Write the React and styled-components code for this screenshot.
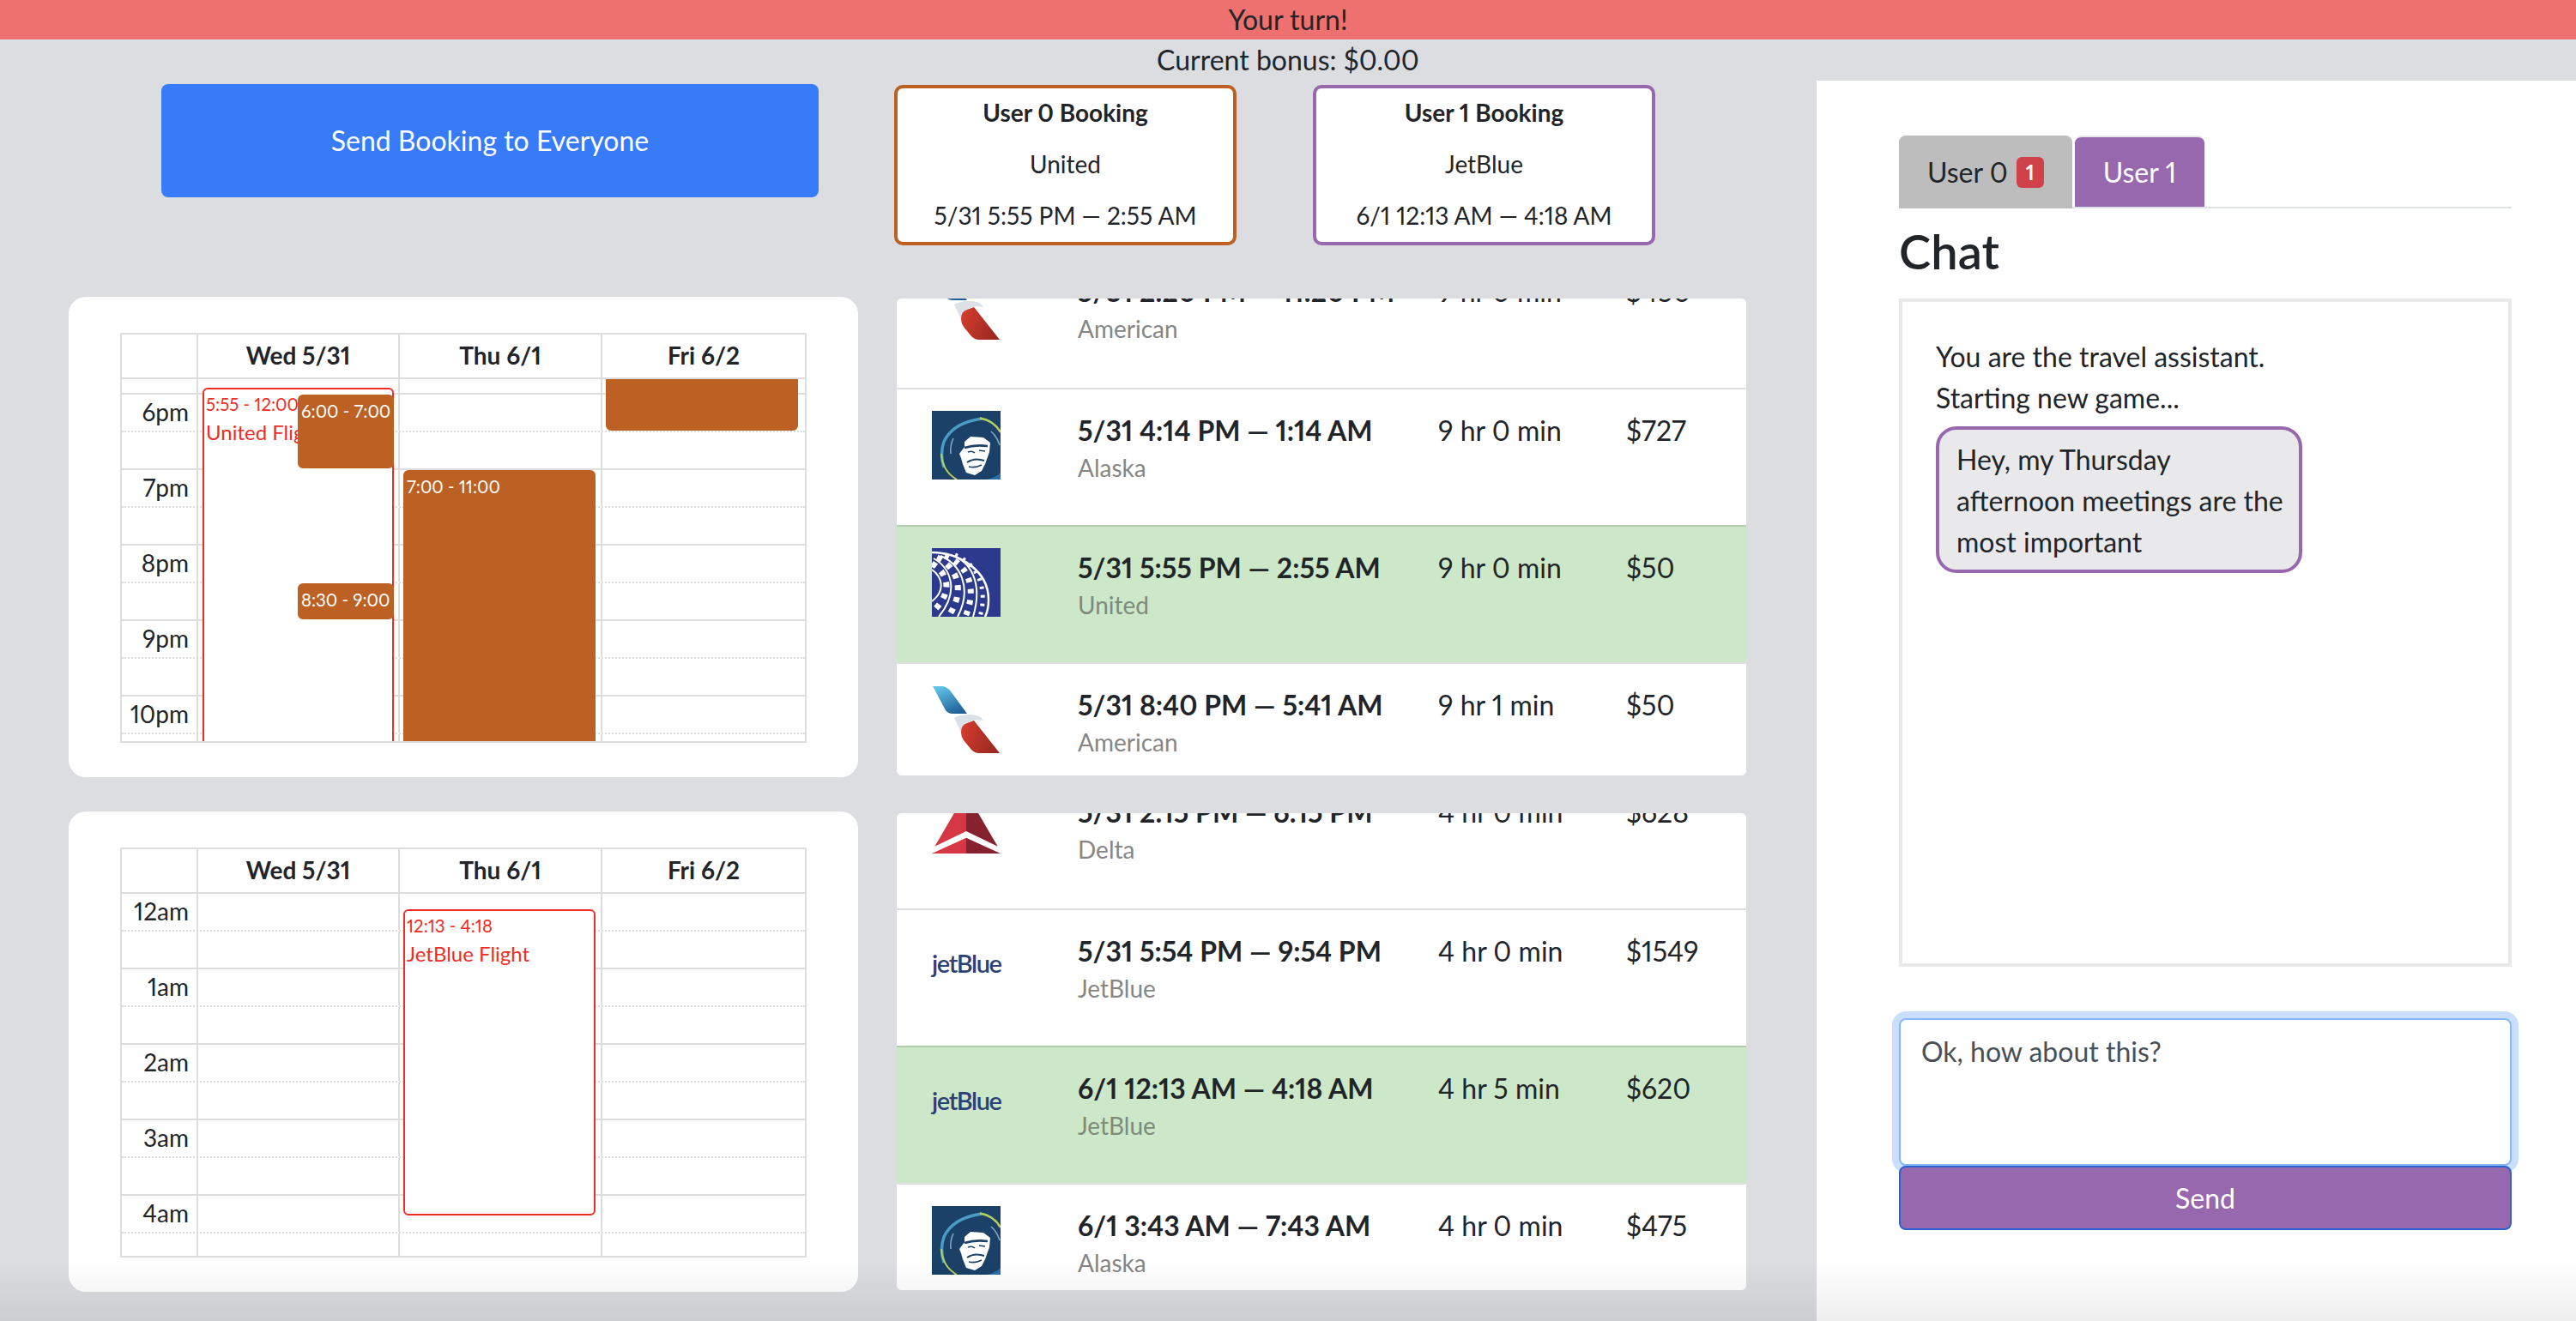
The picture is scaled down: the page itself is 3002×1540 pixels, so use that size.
import React from 'react'
import styled, { createGlobalStyle } from 'styled-components'

const GlobalStyle = createGlobalStyle`
 * {
  box-sizing: border-box;
 }
 body {
  margin: 0;
  background: #dcdde1;
  color: #212529;
  font-family: 'Lato', 'Liberation Sans', sans-serif;
  font-size: 32px;
  line-height: 48px;
  font-variant-numeric: proportional-nums;
  font-feature-settings: 'pnum' 1;
  overflow: hidden;
 }
`

const Page = styled.div`
 width: 3002px;
 height: 1540px;
 display: flex;
 flex-direction: column;
 overflow: hidden;
`

const TurnBanner = styled.div`
 height: 46px;
 background: #ef716f;
 text-align: center;
 line-height: 46px;
`

const BonusLine = styled.div`
 height: 48px;
 text-align: center;
`

const Main = styled.div`
 flex: 1;
 display: flex;
`

const LeftArea = styled.div`
 width: 2117px;
 display: flex;
 flex-direction: column;
`

const TopRow = styled.div`
 height: 252px;
 padding: 4px 0 0 188px;
 display: flex;
 align-items: flex-start;
`

const BookingButton = styled.button`
 width: 766px;
 height: 132px;
 background: #387bf8;
 color: #fff;
 border: none;
 border-radius: 8px;
 font: inherit;
 margin-right: 88px;
`

const BookingCard = styled.div`
 width: 399px;
 height: 187px;
 margin: 1px 89px 0 0;
 border: 4px solid ${(p) => p.$color};
 border-radius: 10px;
 background: #fff;
 text-align: center;
 font-size: 28px;
 line-height: 60px;
 strong {
  display: block;
  margin-top: -2px;
 }
 div {
  white-space: nowrap;
 }
`

const GameRow = styled.div`
 height: 560px;
 margin-bottom: 40px;
 padding-left: 80px;
 display: flex;
 align-items: center;
`

const CalendarCard = styled.div`
 width: 920px;
 height: 560px;
 background: #fff;
 border-radius: 20px;
 padding: 42px 60px 0;
 margin-right: 45px;
`

const Calendar = styled.div`
 width: 800px;
 height: 478px;
 border: 2px solid #ddd;
 display: flex;
 flex-direction: column;
 overflow: hidden;
`

const calendarColumns = '87px 235px 236px 1fr'

const CalendarHeader = styled.div`
 flex: none;
 height: 52px;
 display: grid;
 grid-template-columns: ${calendarColumns};
 border-bottom: 2px solid #ddd;
`

const HeaderCell = styled.div`
 border-left: 2px solid #ddd;
 font-size: 28px;
 font-weight: 700;
 line-height: 48px;
 text-align: center;
 &:first-child {
  border-left: none;
 }
`

const TimeBody = styled.div`
 flex: 1;
 overflow: hidden;
`

const TimeScroll = styled.div`
 position: relative;
 margin-top: ${(p) => p.$offset}px;
`

const SlotRow = styled.div`
 height: 44px;
 display: grid;
 grid-template-columns: ${calendarColumns};
 border-top: 2px ${(p) => (p.$hour ? 'solid' : 'dotted')} #ddd;
`

const SlotCell = styled.div`
 border-left: 2px solid #ddd;
`

const SlotLabel = styled.div`
 padding-right: 9px;
 text-align: right;
 font-size: 28px;
 line-height: 40px;
 white-space: nowrap;
`

const EventLayer = styled.div`
 position: absolute;
 inset: 0;
 display: grid;
 grid-template-columns: ${calendarColumns};
`

const EventColumn = styled.div`
 position: relative;
`

const CalendarEvent = styled.div`
 position: absolute;
 top: ${(p) => p.$top}px;
 left: ${(p) => p.$left}px;
 width: ${(p) => p.$width}px;
 height: ${(p) => p.$height}px;
 padding: 2px;
 border-radius: 6px;
 overflow: hidden;
 white-space: nowrap;
 border: 2px solid ${(p) => (p.$outline ? '#f02d25' : '#bd6023')};
 background: ${(p) => (p.$outline ? '#fff' : '#bd6023')};
 color: ${(p) => (p.$outline ? '#f02d25' : '#fff')};
`

const EventTime = styled.div`
 font-size: 20.4px;
 line-height: 30px;
`

const EventTitle = styled.div`
 font-size: 24px;
 line-height: 36px;
`

const FlightList = styled.div`
 width: 990px;
 height: 556px;
 background: #fff;
 border-radius: 6px;
 overflow: hidden;
`

const FlightScroll = styled.div`
 margin-top: ${(p) => p.$offset}px;
`

const FlightRow = styled.div`
 height: 160px;
 padding: 25px 0 0 41px;
 display: grid;
 grid-template-columns: 80px 90px 420px 219px 1fr;
 align-items: start;
 border-top: 2px solid rgba(0, 0, 0, 0.125);
 background: ${(p) => (p.$selected ? '#cde8c8' : '#fff')};
 &:first-child {
  border-top: none;
 }
`

const LogoBox = styled.div`
 width: 80px;
 height: 80px;
 grid-column: 1;
 display: flex;
 align-items: center;
 svg {
  display: block;
 }
`

const JetBlueMark = styled.span`
 width: 80px;
 margin-top: -6px;
 color: #2d3f77;
 font-size: 29px;
 font-weight: 600;
 letter-spacing: -1.4px;
 line-height: 40px;
 white-space: nowrap;
`

const FlightInfo = styled.div`
 grid-column: 3;
`

const FlightTimes = styled.div`
 font-weight: 700;
 line-height: 46px;
 white-space: nowrap;
`

const Airline = styled.div`
 margin-top: -3px;
 font-size: 28px;
 color: ${(p) => (p.$selected ? '#7d8a7c' : '#868686')};
 line-height: 46px;
`

const FlightValue = styled.div`
 line-height: 46px;
 white-space: nowrap;
`

const ChatPanel = styled.div`
 flex: 1;
 background: #fff;
 padding: 64px 75px 0 96px;
 display: flex;
 flex-direction: column;
`

const TabBar = styled.div`
 height: 85px;
 display: flex;
 border-bottom: 2px solid #dee2e6;
`

const Tab = styled.div`
 height: ${(p) => (p.$active ? '83px' : '85px')};
 margin-right: 3px;
 padding: 0 33px;
 border-radius: 8px 8px 0 0;
 display: flex;
 align-items: center;
 background: ${(p) => (p.$active ? '#9768ae' : '#bdbdbd')};
 color: ${(p) => (p.$active ? '#fff' : '#212529')};
 border-top: ${(p) => (p.$active ? '2px solid #e5e7ea' : 'none')};
`

const Badge = styled.span`
 width: 32px;
 height: 36px;
 margin-left: 10px;
 border-radius: 6px;
 background: #cf4249;
 color: #fff;
 font-size: 24px;
 font-weight: 700;
 line-height: 36px;
 text-align: center;
`

const ChatTitle = styled.h2`
 margin: 0;
 height: 105px;
 font-size: 56px;
 font-weight: 600;
 line-height: 100px;
`

const ChatLog = styled.div`
 height: 779px;
 border: 4px solid #e8e8e8;
 padding: 40px 39px 0;
`

const Bubble = styled.div`
 width: 427px;
 margin-top: 9px;
 padding: 11px 12px 8px 20px;
 border: 4px solid #9768ae;
 border-radius: 24px;
 background: #e9e9eb;
`

const MessageInput = styled.textarea`
 display: block;
 width: 714px;
 height: 172px;
 margin-top: 60px;
 padding: 13px 24px;
 border: 2px solid #86b7fe;
 border-radius: 8px;
 box-shadow: 0 0 0 8px rgba(13, 110, 253, 0.22);
 color: #495057;
 font: inherit;
 outline: none;
 resize: none;
`

const SendButton = styled.button`
 position: relative;
 width: 714px;
 height: 75px;
 background: #9768ae;
 color: #fff;
 border: 2px solid #2b62d0;
 border-radius: 8px;
 font: inherit;
`

const BottomFade = styled.div`
 position: fixed;
 left: 0;
 right: 0;
 bottom: 0;
 height: 70px;
 background: linear-gradient(rgba(0, 0, 0, 0), rgba(0, 0, 0, 0.065));
 pointer-events: none;
`

const AmericanLogo = () => (
 <svg width="80" height="80" viewBox="0 0 80 80">
  <defs>
   <linearGradient id="aaBlue" x1="0.2" y1="0" x2="0.7" y2="1">
    <stop offset="0" stopColor="#63c5ec" />
    <stop offset="1" stopColor="#1f5f96" />
   </linearGradient>
   <linearGradient id="aaRed" x1="0" y1="0" x2="1" y2="0.3">
    <stop offset="0" stopColor="#da3d2f" />
    <stop offset="1" stopColor="#9c2a22" />
   </linearGradient>
  </defs>
  <path d="M1 1H13Q18 2 22 7L41 33H24Q19 33 16 29Z" fill="url(#aaBlue)" />
  <path d="M26 38Q32 34 44 34Q57 34 60 41Q50 39 44 42Q35 46 34 55Z" fill="#dbe1e6" />
  <path d="M34 55Q34 46 41 44L49 41L79 79H55Q50 79 46 75L37 64Q34 60 34 55Z" fill="url(#aaRed)" />
 </svg>
)

const AlaskaLogo = () => (
 <svg width="80" height="80" viewBox="0 0 80 80">
  <rect width="80" height="80" fill="#1c4168" />
  <path d="M14 66Q9 50 14 36Q24 14 58 9" fill="none" stroke="#4a9cc7" strokeWidth="3.5" />
  <path d="M11 50Q12 70 29 80" fill="none" stroke="#b5cf5e" strokeWidth="2" />
  <path d="M56 8.5Q72 11 80 25" fill="none" stroke="#b5cf5e" strokeWidth="2.5" />
  <path d="M64 80Q74 78 80 72V80Z" fill="#2a6fa8" />
  <path d="M25 32Q21 40 22 50" fill="none" stroke="#7fa9c4" strokeWidth="1.6" />
  <path d="M69 24Q76 30 79 40" fill="none" stroke="#7fa9c4" strokeWidth="1.6" />
  <path d="M45 30L60 31L68 37L67 48L62 62L58 70L50 75L40 72L36 62L34 55L32 50L38 42L38 36Z" fill="#fff" />
  <path d="M38 43Q50 39 65 41" fill="none" stroke="#1c4168" strokeWidth="2.6" />
  <path d="M42 48Q47 46 50 49M55 46L62 47" fill="none" stroke="#1c4168" strokeWidth="1.4" />
  <path d="M41 60Q50 54 61 58" fill="none" stroke="#1c4168" strokeWidth="2" />
  <path d="M43 65Q50 67 58 63" fill="none" stroke="#1c4168" strokeWidth="1.6" />
 </svg>
)

const UnitedLogo = () => (
 <svg width="80" height="80" viewBox="0 0 80 80">
  <rect width="80" height="80" fill="#2b3a8c" />
  <g fill="none" stroke="#fff">
   <path d="M0 5C30 5 66 25 66 60Q66 72 62 80" strokeWidth="2.5" />
   <path d="M22 8C45 15 60 40 48 80" strokeWidth="2" />
   <path d="M10 9C32 18 48 45 30 80" strokeWidth="2" />
   <path d="M2 12C20 22 34 48 8 80" strokeWidth="2" />
   <path d="M0 25C10 32 18 48 0 62" strokeWidth="2" />
   <path d="M27 8C52 18 66 45 56 80" strokeWidth="5" strokeDasharray="3 7" />
   <path d="M15 9C38 17 55 42 39 80" strokeWidth="7" strokeDasharray="5 8" />
   <path d="M6 11C26 20 42 46 19 80" strokeWidth="7" strokeDasharray="6 8" />
   <path d="M0 18C16 27 27 48 3 72" strokeWidth="7" strokeDasharray="6 8" />
  </g>
 </svg>
)

const DeltaLogo = () => (
 <svg width="80" height="80" viewBox="0 0 80 80">
  <path d="M40 0L3.3 62.7L40 45Z" fill="#d53745" />
  <path d="M40 0L76.7 62.7L40 45Z" fill="#86222f" />
  <path d="M0 71L40 52.7V71Z" fill="#d53745" />
  <path d="M80 71L40 52.7V71Z" fill="#86222f" />
 </svg>
)

const FlightLogo = ({ airline }) => {
 if (airline === 'American') return <AmericanLogo />
 if (airline === 'Alaska') return <AlaskaLogo />
 if (airline === 'United') return <UnitedLogo />
 if (airline === 'Delta') return <DeltaLogo />
 return <JetBlueMark>jetBlue</JetBlueMark>
}

const upperFlights = [
 { times: '5/31 2:20 PM — 11:20 PM', airline: 'American', length: '9 hr 0 min', price: '$450' },
 { times: '5/31 4:14 PM — 1:14 AM', airline: 'Alaska', length: '9 hr 0 min', price: '$727' },
 { times: '5/31 5:55 PM — 2:55 AM', airline: 'United', length: '9 hr 0 min', price: '$50', selected: true },
 { times: '5/31 8:40 PM — 5:41 AM', airline: 'American', length: '9 hr 1 min', price: '$50' },
]

const lowerFlights = [
 { times: '5/31 2:15 PM — 6:15 PM', airline: 'Delta', length: '4 hr 0 min', price: '$628' },
 { times: '5/31 5:54 PM — 9:54 PM', airline: 'JetBlue', length: '4 hr 0 min', price: '$1549' },
 { times: '6/1 12:13 AM — 4:18 AM', airline: 'JetBlue', length: '4 hr 5 min', price: '$620', selected: true },
 { times: '6/1 3:43 AM — 7:43 AM', airline: 'Alaska', length: '4 hr 0 min', price: '$475' },
]

const days = ['Wed 5/31', 'Thu 6/1', 'Fri 6/2']

const eveningSlots = ['', '6pm', '', '7pm', '', '8pm', '', '9pm', '', '10pm', '', '']
const nightSlots = ['12am', '', '1am', '', '2am', '', '3am', '', '4am', '', '']

const eveningEvents = [
 [
  { top: 38, left: 7, width: 223, height: 420, outline: true, time: '5:55 - 12:00', title: 'United Flight' },
  { top: 46, left: 118, width: 112, height: 86, time: '6:00 - 7:00' },
  { top: 266, left: 118, width: 112, height: 42, time: '8:30 - 9:00 -' },
 ],
 [{ top: 134, left: 6, width: 224, height: 352, time: '7:00 - 11:00' }],
 [{ top: -10, left: 6, width: 224, height: 98 }],
]

const nightEvents = [
 [],
 [{ top: 20, left: 6, width: 224, height: 357, outline: true, time: '12:13 - 4:18', title: 'JetBlue Flight' }],
 [],
]

const CalendarView = ({ slots, events, offset }) => (
 <Calendar>
  <CalendarHeader>
   <HeaderCell />
   {days.map((day) => (
    <HeaderCell key={day}>{day}</HeaderCell>
   ))}
  </CalendarHeader>
  <TimeBody>
   <TimeScroll $offset={offset}>
    {slots.map((label, index) => (
     <SlotRow key={index} $hour={label !== '' || index === 0}>
      <SlotLabel>{label}</SlotLabel>
      <SlotCell />
      <SlotCell />
      <SlotCell />
     </SlotRow>
    ))}
    <EventLayer>
     <div />
     {events.map((column, index) => (
      <EventColumn key={index}>
       {column.map((event, i) => (
        <CalendarEvent
         key={i}
         $top={event.top}
         $left={event.left}
         $width={event.width}
         $height={event.height}
         $outline={event.outline}
        >
         {event.time && <EventTime>{event.time}</EventTime>}
         {event.title && <EventTitle>{event.title}</EventTitle>}
        </CalendarEvent>
       ))}
      </EventColumn>
     ))}
    </EventLayer>
   </TimeScroll>
  </TimeBody>
 </Calendar>
)

const FlightTable = ({ flights, offset }) => (
 <FlightList>
  <FlightScroll $offset={offset}>
   {flights.map((flight) => (
    <FlightRow key={flight.times} $selected={flight.selected}>
     <LogoBox>
      <FlightLogo airline={flight.airline} />
     </LogoBox>
     <FlightInfo>
      <FlightTimes>{flight.times}</FlightTimes>
      <Airline $selected={flight.selected}>{flight.airline}</Airline>
     </FlightInfo>
     <FlightValue>{flight.length}</FlightValue>
     <FlightValue>{flight.price}</FlightValue>
    </FlightRow>
   ))}
  </FlightScroll>
 </FlightList>
)

const App = () => {
 return (
  <Page>
   <GlobalStyle />
   <TurnBanner>Your turn!</TurnBanner>
   <BonusLine>Current bonus: $0.00</BonusLine>
   <Main>
    <LeftArea>
     <TopRow>
      <BookingButton>Send Booking to Everyone</BookingButton>
      <BookingCard $color="#bd6023">
       <strong>User 0 Booking</strong>
       <div>United</div>
       <div>5/31 5:55 PM — 2:55 AM</div>
      </BookingCard>
      <BookingCard $color="#9768ae">
       <strong>User 1 Booking</strong>
       <div>JetBlue</div>
       <div>6/1 12:13 AM — 4:18 AM</div>
      </BookingCard>
     </TopRow>
     <GameRow>
      <CalendarCard>
       <CalendarView slots={eveningSlots} events={eveningEvents} offset={-28} />
      </CalendarCard>
      <FlightTable flights={upperFlights} offset={-56} />
     </GameRow>
     <GameRow>
      <CalendarCard>
       <CalendarView slots={nightSlots} events={nightEvents} offset={-2} />
      </CalendarCard>
      <FlightTable flights={lowerFlights} offset={-49} />
     </GameRow>
    </LeftArea>
    <ChatPanel>
     <TabBar>
      <Tab>
       User 0<Badge>1</Badge>
      </Tab>
      <Tab $active>User 1</Tab>
     </TabBar>
     <ChatTitle>Chat</ChatTitle>
     <ChatLog>
      <div>You are the travel assistant.</div>
      <div>Starting new game...</div>
      <Bubble>Hey, my Thursday afternoon meetings are the most important</Bubble>
     </ChatLog>
     <MessageInput defaultValue="Ok, how about this?" />
     <SendButton>Send</SendButton>
    </ChatPanel>
   </Main>
   <BottomFade />
  </Page>
 )
}

export default App
